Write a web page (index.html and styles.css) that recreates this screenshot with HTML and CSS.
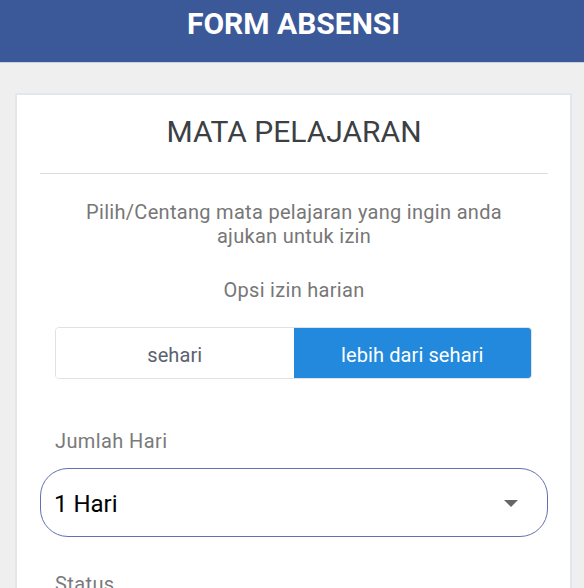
FILE: index.html
```html
<!DOCTYPE html>
<html lang="id">
<head>
<meta charset="utf-8">
<title>Form Absensi</title>
<link rel="stylesheet" href="styles.css">
</head>
<body>
<header class="topbar">
  <h1 class="topbar-title">FORM ABSENSI</h1>
</header>
<main class="page">
  <section class="card">
    <h2 class="card-title">MATA PELAJARAN</h2>
    <hr class="divider">
    <p class="hint">Pilih/Centang mata pelajaran yang ingin anda ajukan untuk izin</p>
    <p class="hint option-label">Opsi izin harian</p>
    <div class="toggle">
      <button class="toggle-btn">sehari</button>
      <button class="toggle-btn active">lebih dari sehari</button>
    </div>
    <label class="field-label">Jumlah Hari</label>
    <div class="select">
      <span class="select-value">1 Hari</span>
      <svg class="select-arrow" width="14" height="7" viewBox="0 0 14 7"><path d="M0 0H14L7 7Z" fill="#666"/></svg>
    </div>
    <label class="field-label status-label">Status</label>
  </section>
</main>
</body>
</html>
```

FILE: styles.css
```css
* { box-sizing: border-box; }
html, body {
  margin: 0;
  padding: 0;
  background: #efefef;
  font-family: Roboto, "Noto Sans", Arial, sans-serif;
  overflow: hidden;
}
.topbar {
  height: 63px;
  background: #3b5998;
  border-bottom: 1px solid #c9d0de;
  padding-top: 6px;
}
.topbar-title {
  margin: 0;
  text-align: center;
  color: #ffffff;
  font-size: 30px;
  line-height: 36px;
  font-weight: 700;
  padding-left: 3px;
}
.page {
  padding: 30px 12px 0 15px;
}
.card {
  background: #ffffff;
  border: 2px solid #e2e7ed;
  border-bottom: none;
  padding: 19px 22px 40px 23px;
  min-height: 600px;
}
.card-title {
  margin: 0;
  text-align: center;
  font-size: 30px;
  line-height: 36px;
  font-weight: 400;
  color: #3c4043;
}
.divider {
  margin: 23px 0 0 0;
  border: 0;
  border-top: 1px solid #dcdcdc;
  height: 0;
}
.hint {
  margin: 26px 0 0 0;
  text-align: center;
  color: #777777;
  font-size: 20px;
  line-height: 24px;
  letter-spacing: 0.3px;
  padding: 0 30px;
}
.option-label {
  margin-top: 30px;
}
.toggle {
  display: flex;
  margin: 25px 16px 0 15px;
  height: 52px;
  border: 1px solid #dee2e6;
  border-radius: 4px;
  overflow: hidden;
}
.toggle-btn {
  flex: 1;
  border: 0;
  background: #ffffff;
  color: #5a6270;
  font-family: inherit;
  font-size: 20px;
  letter-spacing: 0.1px;
  padding: 3px 0 0 0;
  margin: 0;
}
.toggle-btn.active {
  background: #2289dc;
  color: #ffffff;
}
.field-label {
  display: block;
  margin: 50px 0 0 15px;
  color: #7a7a7a;
  font-size: 20px;
  line-height: 24px;
  letter-spacing: 0.4px;
}
.select {
  display: flex;
  align-items: center;
  justify-content: space-between;
  margin-top: 15px;
  height: 69px;
  border: 1.5px solid #6370b2;
  border-radius: 28px;
  padding: 3px 29px 0 13px;
}
.select-value {
  font-size: 24px;
  color: #000000;
  line-height: 28px;
}
.select-arrow {
  display: block;
  margin-top: -2px;
}
.status-label {
  margin-top: 35px;
}
```
